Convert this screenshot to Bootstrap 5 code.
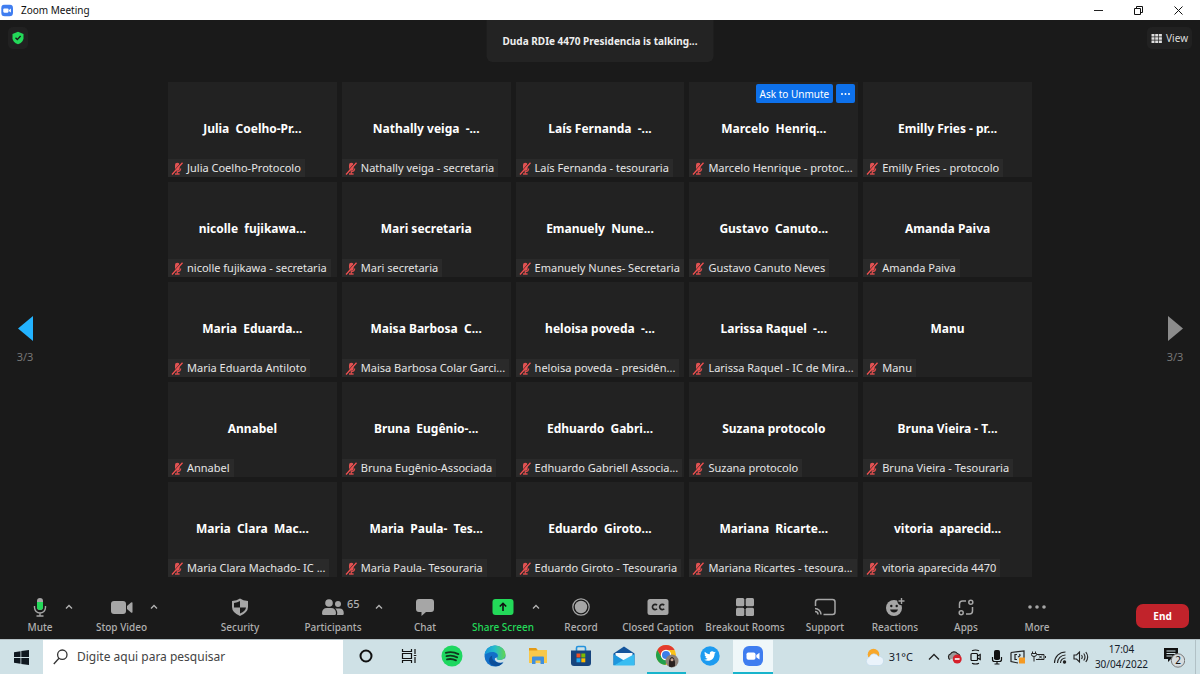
<!DOCTYPE html>
<html lang="pt-BR">
<head>
<meta charset="utf-8">
<meta name="viewport" content="width=device-width, initial-scale=1">
<title>Zoom Meeting</title>
<link href="https://cdn.jsdelivr.net/npm/bootstrap@5.3.0/dist/css/bootstrap.min.css" rel="stylesheet">
<style>
  body { font-family: "Noto Sans", "Open Sans", sans-serif; font-size: 11px; line-height: 16px; background: #1a1a1a; color: #e6e6e6; }
  button { font: inherit; color: inherit; background: none; border: 0; padding: 0; }
  svg { display: block; flex: none; }
  .titlebar { height: 20px; background: #fff; color: #111; font-size: 10px; padding-right: 2px; }
  .win-btn { width: 40px; height: 20px; display: grid; place-content: center; }
  .meeting { min-height: 0; }
  .meeting-top { height: 62px; }
  .talking { background: #232323; border-radius: 0 0 6px 6px; height: 42px; padding: 0 16px; font-size: 10px; font-weight: 700; color: #eee; }
  .corner-btn { background: #212121; border-radius: 5px; height: 22px; font-size: 10px; color: #ddd; margin-top: 7px; }
  .side { width: 14%; }
  .pager { width: 50px; color: #777; font-size: 11px; padding-top: 10px; }
  .gallery { display: grid; grid-template-columns: repeat(5, minmax(0, 1fr)); grid-auto-rows: minmax(0, 1fr); gap: 5px; margin-bottom: 11px; }
  .tile { background: #222; padding-bottom: 2px; }
  .tile-name { font-size: 12px; font-weight: 700; color: #fff; white-space: pre; }
  .tile-label { left: 0; bottom: 0; max-width: 100%; height: 18px; background: #2a2a2a; padding: 0 4px 0 3px; gap: 4px; white-space: nowrap; }
  .tile-tools { top: 2px; right: 3px; gap: 3px; }
  .tile-tools button { background: #0e71eb; color: #fff; height: 19px; padding: 0 4px; border-radius: 2px; font-size: 10px; }
  .controls { display: grid; height: 51px; padding: 0 11px 0 16px; color: #b0b0b0; font-size: 10px; font-weight: 500;
    grid-template-columns: 48fr 30fr 55fr 39fr 104fr 82fr 26fr 50fr 25fr 56fr 10fr 80fr 74fr 100fr 60fr 80fr 62fr 80fr 112fr; }
  .controls > * { min-width: 0; }
  .ctl { display: flex; flex-direction: column; align-items: center; white-space: nowrap; padding-top: 9px; gap: 2px; }
  .ctl svg { height: 20px; }
  .chev { width: 10px; height: 37px; }
  .count { left: 100%; top: -1px; margin-left: 3px; font-size: 11px; }
  .share { color: #23d959; }
  .end-btn { background: #c1232b; color: #fff; width: 53px; height: 24px; border-radius: 7px; font-weight: 700; }
  .taskbar { height: 35px; background: #cfe1e6; color: #16202a; border-top: 1px solid #b4c0c4; }
  .start-btn { width: 43px; }
  .search { width: 25%; background: #fff; padding-left: 10px; gap: 9px; }
  .search input { border: 0; outline: 0; padding: 0; width: 100%; background: none; color: #444; font-size: 12px; }
  .search input::placeholder { color: #444; opacity: 1; }
  .apps { margin-left: 1px; }
  .app { width: 43px; border-bottom: 2px solid transparent; }
  .app.running { border-image: linear-gradient(90deg, transparent 4px, #18b4cc 4px, #18b4cc 39px, transparent 39px) 2; }
  .app.active { background: #eff7f9; border-color: #18b4cc; width: 40px; margin-left: 2px; }
  .weather { gap: 1px; margin-right: 10px; }
  .tray { width: 21px; }
  .clock { width: 61px; font-size: 10px; line-height: 15px; }
  .notif { width: 44px; border-right: 1px solid #b2c1c6; margin-right: 4px; }
</style>
</head>
<body class="vh-100 d-flex flex-column overflow-hidden">

<svg width="0" height="0" class="position-absolute" aria-hidden="true">
  <symbol id="muted" viewBox="0 0 12 13">
    <path d="M4 3a2.300 2.300 0 0 1 4.600 0v3.500a2.300 2.300 0 0 1-4.600 0z" fill="#e05252"/>
    <path d="M6.300 9v3M4 12h4.600M9.600 6.500q0 3-3.300 3" fill="none" stroke="#d84c4c" stroke-width="1.300"/>
    <path d="M10.400.6.600 11.600" stroke="#262626" stroke-width="1"/>
    <path d="M11.500.8 1 12.500" stroke="#f05050" stroke-width="1.300"/>
  </symbol>
  <symbol id="up" viewBox="0 0 10 10"><path d="M2 6.500 5 3.500l3 3" fill="none" stroke="#b4b4b4" stroke-width="1.300"/></symbol>
  <symbol id="cam" viewBox="0 0 20 20">
    <rect width="20" height="20" rx="6" fill="#3f7df0"/>
    <rect x="3.500" y="6.500" width="9" height="7.200" rx="1.800" fill="#fff"/><path d="M13.300 9 16.500 6.700v6.800L13.300 11.200z" fill="#fff"/>
  </symbol>
</svg>

<header class="titlebar d-flex align-items-center flex-shrink-0">
  <svg width="13" height="13" class="ms-0 me-1" viewBox="-2 0 22 20"><use href="#cam" width="20" height="20"/></svg>
  <span class="ps-1">Zoom Meeting</span>
  <div class="d-flex ms-auto">
    <button class="win-btn" aria-label="Minimizar"><svg width="11" height="11"><path d="M1 5.500h9" stroke="#222"/></svg></button>
    <button class="win-btn" aria-label="Restaurar"><svg width="11" height="11"><path d="M1.500 3.500h6v6h-6zM3.500 3V1.500h6v6H8" fill="none" stroke="#111"/></svg></button>
    <button class="win-btn" aria-label="Fechar"><svg width="11" height="11"><path d="m1.500 1.500 8 8m0-8-8 8" stroke="#111"/></svg></button>
  </div>
</header>

<main class="meeting flex-grow-1 d-flex flex-column">
  <div class="meeting-top d-flex justify-content-between align-items-start flex-shrink-0 position-relative">
    <button class="corner-btn d-flex align-items-center px-1 ms-2" aria-label="Criptografia">
      <svg width="12" height="14" viewBox="0 0 12 14"><path d="M6 .8 11.500 3v4.200c0 2.600-2 4.700-5.500 6-3.500-1.300-5.500-3.400-5.500-6V3z" fill="#23d959"/><path d="M3.500 6.800 5.300 8.600 8.600 5" fill="none" stroke="#1a1a1a" stroke-width="1.400"/></svg>
    </button>
    <div class="position-absolute start-50 translate-middle-x top-0 talking d-flex align-items-center text-nowrap">Duda RDIe 4470 Presidencia is talking...</div>
    <button class="corner-btn d-flex align-items-center me-2 px-1 gap-1">
      <svg width="11" height="11" viewBox="0 0 11 11" fill="#ddd"><path d="M.5 1h3v2.500h-3zM4.200 1h3v2.500h-3zM7.900 1h3v2.500h-3zM.5 4.300h3v2.500h-3zM4.200 4.300h3v2.500h-3zM7.900 4.300h3v2.500h-3zM.5 7.600h3v2.500h-3zM4.200 7.600h3v2.500h-3zM7.900 7.600h3v2.500h-3z"/></svg>
      View
    </button>
  </div>
  <div class="d-flex flex-grow-1">
    <div class="side d-flex align-items-center">
      <button class="pager d-flex flex-column align-items-center gap-2" aria-label="Página anterior">
        <svg width="15" height="25"><path d="M15 0v25L0 12.500z" fill="#23b3ff"/></svg>3/3
      </button>
    </div>
    <section class="gallery flex-grow-1" id="gallery" aria-label="Participantes"></section>
    <div class="side d-flex align-items-center justify-content-end">
      <button class="pager d-flex flex-column align-items-center gap-2" aria-label="Próxima página">
        <svg width="15" height="25"><path d="M0 0v25l15-12.500z" fill="#8c8c8c"/></svg>3/3
      </button>
    </div>
  </div>
</main>

<nav class="controls flex-shrink-0" aria-label="Controles da reunião">
  <button class="ctl"><svg width="16" viewBox="0 0 16 20"><rect x="5" y="1" width="6" height="12" rx="3" fill="#a6a6a6"/><path d="M5 5h6v5a3 3 0 0 1-6 0z" fill="#23d959"/><path d="M2.500 9v1.500a5.500 5.500 0 0 0 11 0V9M8 16v3M4.500 19h7" fill="none" stroke="#a6a6a6" stroke-width="1.400"/></svg>Mute</button>
  <button class="chev" aria-label="Opções de áudio"><svg width="10" height="10"><use href="#up"/></svg></button>
  <button class="ctl"><svg width="22" viewBox="0 0 22 20" fill="#a6a6a6"><rect y="4" width="15" height="13" rx="3"/><path d="M16 9l4-3.500q1.500-.8 1.500.5v9q0 1.300-1.500.5L16 12z"/></svg>Stop Video</button>
  <button class="chev" aria-label="Opções de vídeo"><svg width="10" height="10"><use href="#up"/></svg></button>
  <button class="ctl"><svg width="18" viewBox="0 0 18 20"><path d="M9 1.500q3 2.300 8 2.500v6q0 5.500-8 9-8-3.500-8-9V4q5-.2 8-2.500z" fill="#a6a6a6"/><path d="M9 4v6.500H3V6q3.500-.3 6-2zM9 10.500h6q-.3 3.500-6 6z" fill="#1a1a1a"/></svg>Security</button>
  <button class="ctl"><span class="position-relative"><svg width="22" viewBox="0 0 22 20" fill="#a6a6a6"><circle cx="7" cy="6" r="3.800"/><circle cx="16" cy="7" r="3"/><path d="M0 16.500Q0 11 5 11h4q5 0 5 5.500 0 1.500-1.500 1.500h-11Q0 18 0 16.500zM15 18q1-4-1.800-6.500h4.300q4.300 0 4.300 5 0 1.500-1.300 1.500z"/></svg><span class="count position-absolute">65</span></span>Participants</button>
  <button class="chev" aria-label="Opções de participantes"><svg width="10" height="10"><use href="#up"/></svg></button>
  <button class="ctl"><svg width="20" viewBox="0 0 20 20"><path d="M4 2h12q3 0 3 3v7q0 3-3 3h-5l-4.500 4V15H4q-3 0-3-3V5q0-3 3-3z" fill="#a6a6a6"/></svg>Chat</button>
  <span aria-hidden="true"></span>
  <button class="ctl share"><svg width="22" viewBox="0 0 22 20"><rect x=".5" y="2" width="21" height="16" rx="3" fill="#23d959"/><path d="M11 14V6.500M7.800 9.500 11 6.300l3.200 3.200" fill="none" stroke="#111" stroke-width="1.600"/></svg>Share Screen</button>
  <button class="chev" aria-label="Opções de compartilhamento"><svg width="10" height="10"><use href="#up"/></svg></button>
  <button class="ctl"><svg width="18" viewBox="0 0 18 20"><circle cx="9" cy="10" r="8.200" fill="none" stroke="#a6a6a6" stroke-width="1.200"/><circle cx="9" cy="10" r="6.200" fill="#a6a6a6"/></svg>Record</button>
  <button class="ctl"><svg width="22" viewBox="0 0 22 20"><rect x=".5" y="2" width="21" height="16" rx="2.500" fill="#a6a6a6"/><path d="M10 8.300a2.600 2.600 0 1 0 0 3.500M17.200 8.300a2.600 2.600 0 1 0 0 3.500" fill="none" stroke="#222" stroke-width="1.700"/></svg>Closed Caption</button>
  <button class="ctl"><svg width="18" viewBox="0 0 18 20" fill="#a6a6a6"><rect y="1" width="8.300" height="8.300" rx="1.500"/><rect x="9.700" y="1" width="8.300" height="8.300" rx="1.500"/><rect y="10.700" width="8.300" height="8.300" rx="1.500"/><rect x="9.700" y="10.700" width="8.300" height="8.300" rx="1.500"/></svg>Breakout Rooms</button>
  <button class="ctl"><svg width="22" viewBox="0 0 22 20" fill="none" stroke="#a6a6a6" stroke-width="1.500"><path d="M1.500 9V5q0-2.500 2.500-2.500h14.500q2.500 0 2.500 2.500v10q0 2.500-2.500 2.500H9.500M1 11.500a6 6 0 0 1 6 6M1 14.500a3 3 0 0 1 3 3"/></svg>Support</button>
  <button class="ctl"><svg width="20" viewBox="0 0 20 20"><circle cx="9" cy="11" r="8" fill="#a6a6a6"/><circle cx="16.500" cy="4" r="4.200" fill="#1a1a1a"/><path d="M16.500 1v6M13.500 4h6" stroke="#a6a6a6" stroke-width="1.400"/><circle cx="6.300" cy="9" r="1.200" fill="#1a1a1a"/><circle cx="11.700" cy="9" r="1.200" fill="#1a1a1a"/><path d="M5 12.500a4.200 4.200 0 0 0 8 0z" fill="#1a1a1a"/></svg>Reactions</button>
  <button class="ctl"><svg width="16" viewBox="0 0 16 20" fill="none" stroke="#a6a6a6" stroke-width="1.500"><path d="M1.500 11V7q0-3 3-3H8M14.500 10v4q0 3-3 3H8"/><circle cx="12.800" cy="5.200" r="2"/><circle cx="3.200" cy="15.800" r="2"/></svg>Apps</button>
  <button class="ctl"><svg width="20" viewBox="0 0 20 20" fill="#a6a6a6"><circle cx="3" cy="10" r="1.800"/><circle cx="10" cy="10" r="1.800"/><circle cx="17" cy="10" r="1.800"/></svg>More</button>
  <div class="d-flex align-items-center justify-content-end pt-1"><button class="end-btn">End</button></div>
</nav>

<footer class="taskbar d-flex flex-shrink-0">
  <button class="start-btn d-flex align-items-center justify-content-center" aria-label="Iniciar"><svg width="15" height="15" viewBox="0 0 15 15"><path d="M0 2.200 6.500 1.200V7H0zM7.300 1.100 15 0v7H7.300zM0 8h6.500v5.800L0 12.800zM7.300 8H15v7l-7.700-1.100z" fill="#101820"/></svg></button>
  <label class="search d-flex align-items-center">
    <svg width="15" height="16" viewBox="0 0 15 16" fill="none" stroke="#333" stroke-width="1.300"><circle cx="9.300" cy="5.700" r="4.700"/><path d="M6 9.200.8 15"/></svg>
    <input type="text" placeholder="Digite aqui para pesquisar" aria-label="Pesquisar">
  </label>
  <div class="apps d-flex">
    <button class="app d-flex align-items-center justify-content-center" aria-label="Cortana"><svg width="14" height="14"><circle cx="7" cy="7" r="5.500" fill="none" stroke="#111" stroke-width="2"/></svg></button>
    <button class="app d-flex align-items-center justify-content-center" aria-label="Visão de tarefas"><svg width="16" height="16" fill="none" stroke="#111" stroke-width="1.200"><path d="M1.500 1v2.500h9V1M1.500 15v-2.500h9V15M1.500 5.500h9v5h-9zM14 1v5M14 9v6M12.800 7.500h2.500"/></svg></button>
    <button class="app d-flex align-items-center justify-content-center" aria-label="Spotify"><svg width="22" height="22" viewBox="0 0 22 22"><circle cx="11" cy="11" r="10.500" fill="#1ed760"/><path d="M4.800 7.800q6.500-1.900 12.600 1.300M5.500 11.200q5.500-1.500 10.700 1.200M6 14.400q4.600-1.200 9 1" fill="none" stroke="#10351d" stroke-width="1.800" stroke-linecap="round"/></svg></button>
    <button class="app d-flex align-items-center justify-content-center" aria-label="Edge"><svg width="22" height="22" viewBox="0 0 22 22"><defs><linearGradient id="ed" x2="1"><stop stop-color="#1795dc"/><stop offset=".5" stop-color="#25bec9"/><stop offset="1" stop-color="#64d64e"/></linearGradient></defs><circle cx="11" cy="11" r="10.500" fill="#126fc8"/><path d="M.5 10C1.300 4 5.500.5 11 .5c6 0 10.500 4.200 10.500 9 0 4-3 5.500-5.500 5.500-3.500 0-4-1.200-2.800-2.500C15.500 9.500 12 7 8.500 7 4.500 7 1.500 9 .5 10z" fill="url(#ed)"/><path d="M8.300 10.500c-1.500 5 4 8.300 10.800 6.700-2.500 4-8 5.300-12 2.300-3.300-2.700-2.500-7.500 1.200-9z" fill="#0c4f9b"/><path d="M13.200 12.500c-1 1.300-.6 2.500 2.800 2.500 1.600 0 3.300-.7 4.400-1.800l1.600 1.300-2.600 2.800c-4.300 1.300-8.300-.3-8.700-3.300q-.1-1.200 2.500-1.500z" fill="#cfe1e6"/></svg></button>
    <button class="app d-flex align-items-center justify-content-center" aria-label="Explorador de Arquivos"><svg width="20" height="18" viewBox="0 0 20 18"><path d="M1 1h7l2 2h9v13H1z" fill="#f8c84a"/><path d="M1 1h7l1.500 2.500H1z" fill="#e39a17"/><path d="M4 17v-6.500q0-1 1-1h10q1 0 1 1V17h-3.500v-3.500h-5V17z" fill="#3f8fdd"/></svg></button>
    <button class="app d-flex align-items-center justify-content-center" aria-label="Microsoft Store"><svg width="22" height="22" viewBox="0 0 22 22"><path d="M6.500 6V3q0-1.500 1.500-1.500h6q1.500 0 1.500 1.500v3" fill="none" stroke="#2492dc" stroke-width="1.600"/><path d="M1 5.500h20V18q0 3-3 3H4q-3 0-3-3z" fill="#17447d"/><path fill="#f25022" d="M6.500 8.500h4v4h-4z"/><path fill="#7fba00" d="M11.300 8.500h4v4h-4z"/><path fill="#23a8ef" d="M6.500 13.300h4v4h-4z"/><path fill="#ffb900" d="M11.300 13.300h4v4h-4z"/></svg></button>
    <button class="app d-flex align-items-center justify-content-center" aria-label="Email"><svg width="22" height="20" viewBox="0 0 22 20"><path d="M.5 7.500 11 .5l10.500 7V19H.5z" fill="#13549c"/><path d="M2.500 7h17v7h-17z" fill="#f5fafd"/><path d="M.5 8 11 14.500.5 19.500z" fill="#1d96dd"/><path d="M21.500 8 .5 19.500h21z" fill="#39bdf2"/></svg></button>
    <button class="app running d-flex align-items-center justify-content-center" aria-label="Chrome"><svg width="24" height="24" viewBox="0 0 24 24"><circle cx="11" cy="11" r="10" fill="#fbc116"/><path d="M2.300 6A10 10 0 0 1 19.700 6H11a5 5 0 0 0-4.300 7.500z" fill="#e33b2e"/><path d="M2.300 6 6.700 13.500A5 5 0 0 0 12 15.900L10.500 21A10 10 0 0 1 2.300 6z" fill="#22a04b"/><circle cx="11" cy="11" r="5.200" fill="#fff"/><circle cx="11" cy="11" r="4" fill="#3c7ee8"/><circle cx="17" cy="17" r="6.500" fill="#8c8078"/><path d="M14 22.500q-.5-6 1-8 2-3 4 0 1.500 3 1 7.500-3 2-6 .5z" fill="#2a211f"/><circle cx="17" cy="15.800" r="1.500" fill="#c9a793"/></svg></button>
    <button class="app d-flex align-items-center justify-content-center" aria-label="Twitter"><svg width="20" height="20" viewBox="0 0 20 20"><circle cx="10" cy="10" r="9.700" fill="#1d9bf0"/><path d="M15.800 6.300c-.4.200-.9.300-1.400.4.500-.3.900-.8 1-1.300-.4.300-1 .5-1.500.6a2.400 2.400 0 0 0-4.100 2.200c-2-.1-3.700-1-4.900-2.500-.7 1.100-.3 2.500.7 3.200-.4 0-.8-.1-1-.3 0 1.200.8 2.100 1.900 2.400-.4.100-.7.100-1.100 0 .3 1 1.200 1.600 2.200 1.700-1 .8-2.200 1.100-3.500 1 4.600 2.900 10.500.2 10.500-6.200.5-.3.900-.8 1.200-1.200z" fill="#fff"/></svg></button>
    <button class="app active d-flex align-items-center justify-content-center" aria-label="Zoom"><svg width="20" height="20"><use href="#cam"/></svg></button>
  </div>
  <div class="d-flex align-items-stretch ms-auto">
    <button class="weather d-flex align-items-center">
      <svg width="24" height="18" viewBox="0 0 24 18"><circle cx="9.500" cy="6.500" r="5.800" fill="#f8a72a"/><path d="M6 17.500a4.300 4.300 0 0 1-.5-8.400 4.800 4.800 0 0 1 8.800-.8 4.600 4.600 0 0 1 1.200 9.200z" fill="#eaf3fb" stroke="#bed6ea" stroke-width=".6"/></svg>31°C
    </button>
    <button class="tray d-flex align-items-center justify-content-center" aria-label="Ícones ocultos"><svg width="12" height="8"><path d="m1 6.500 5-5 5 5" fill="none" stroke="#222" stroke-width="1.300"/></svg></button>
    <button class="tray d-flex align-items-center justify-content-center" aria-label="OneDrive"><svg width="15" height="14" viewBox="0 0 15 14"><path d="M3 9.500a3 3 0 0 1 .5-5.500 4 4 0 0 1 6.800-.5A3.500 3.500 0 0 1 13 6" fill="#9b9b9b" stroke="#222" stroke-width="1.100"/><circle cx="10.200" cy="9" r="4.500" fill="#d6202b"/><path d="M7.800 9h4.800" stroke="#fff" stroke-width="1.600"/></svg></button>
    <button class="tray d-flex align-items-center justify-content-center" aria-label="Reunir agora"><svg width="14" height="16" fill="none" stroke="#111" stroke-width="1.200"><rect x="2" y="4.500" width="6.500" height="7" rx="1"/><path d="m8.500 7 2.700-1.500v5L8.500 9M3 1.800q3.500-1.600 7 0M3 14.200q3.500 1.600 7 0"/></svg></button>
    <button class="tray d-flex align-items-center justify-content-center" aria-label="Microfone"><svg width="12" height="16"><rect x="3" y="1" width="6" height="10" rx="1.800" fill="#111"/><path d="M1.500 8v2.500q0 2 2 2h5q2 0 2-2V8M6 12.500V15M3.500 15h5" fill="none" stroke="#111" stroke-width="1.200"/></svg></button>
    <button class="tray d-flex align-items-center justify-content-center" aria-label="Atualização"><svg width="16" height="16"><path d="M1 3.500 14 2v7M1 3.500v9l7 1.500M7 5.500H5v5h2M9.500 5q1.500 2-1.500 3" fill="none" stroke="#222" stroke-width="1.200"/><rect x="9" y="8.500" width="6" height="6" fill="#f59a23"/></svg></button>
    <button class="tray d-flex align-items-center justify-content-center" aria-label="Bateria"><svg width="15" height="12" fill="none" stroke="#222"><path d="M6 3.500h7v5H5M14.500 5v2M8 4.500l3 3M11 4.500l-3 3M1.500.5v2M4.500.5v2M.5 2.500h5v1q0 2-2.500 2t-2.500-2zM3 5.500v5"/></svg></button>
    <button class="tray d-flex align-items-center justify-content-center" aria-label="Rede"><svg width="14" height="14" viewBox="0 0 14 14" fill="none" stroke="#222" stroke-width="1.100"><path d="M1.500 13A11 11 0 0 1 12.500 2M4.500 13a8 8 0 0 1 8-8M7.500 13a5 5 0 0 1 5-5"/><circle cx="11.500" cy="12" r="1.200" fill="#222"/></svg></button>
    <button class="tray d-flex align-items-center justify-content-center" aria-label="Volume"><svg width="16" height="14" fill="none" stroke="#222" stroke-width="1.100"><path d="M1 5h2.500L6.500 2v10L3.500 9H1zM8.500 5q1.500 2 0 4M10.700 3.500q2.600 3.500 0 7M12.800 2q3.800 5 0 10"/></svg></button>
    <button class="clock d-flex flex-column align-items-center justify-content-center"><span>17:04</span><span>30/04/2022</span></button>
    <button class="notif d-flex align-items-center justify-content-center" aria-label="2 notificações">
      <svg width="22" height="22" viewBox="0 0 22 22"><path d="M1 2h14v11H8l-3 3v-3H1z" fill="#111"/><path d="M3.500 5h9M3.500 7.500h9M3.500 10h6" stroke="#cfe1e6"/><circle cx="15" cy="14.500" r="6.700" fill="#d5dcdf" stroke="#777"/><text x="15" y="18" text-anchor="middle" font-size="10" fill="#111">2</text></svg>
    </button>
  </div>
</footer>

<script>
  // Each participant: name shown in the middle of the tile, label at its foot.
  const people = [
    ["Julia  Coelho-Pr...", "Julia Coelho-Protocolo"], ["Nathally veiga  -...", "Nathally veiga - secretaria"], ["Laís Fernanda  -...", "Laís Fernanda - tesouraria"], ["Marcelo  Henriq...", "Marcelo Henrique - protoc..."], ["Emilly Fries - pr...", "Emilly Fries - protocolo"],
    ["nicolle  fujikawa...", "nicolle fujikawa - secretaria"], ["Mari secretaria", "Mari secretaria"], ["Emanuely  Nune...", "Emanuely Nunes- Secretaria"], ["Gustavo  Canuto...", "Gustavo Canuto Neves"], ["Amanda Paiva", "Amanda Paiva"],
    ["Maria  Eduarda...", "Maria Eduarda Antiloto"], ["Maisa Barbosa  C...", "Maisa Barbosa Colar Garci..."], ["heloisa poveda  -...", "heloisa poveda - presidên..."], ["Larissa Raquel  -...", "Larissa Raquel - IC de Mira..."], ["Manu", "Manu"],
    ["Annabel", "Annabel"], ["Bruna  Eugênio-...", "Bruna Eugênio-Associada"], ["Edhuardo  Gabri...", "Edhuardo Gabriell Associa..."], ["Suzana protocolo", "Suzana protocolo"], ["Bruna Vieira - T...", "Bruna Vieira - Tesouraria"],
    ["Maria  Clara  Mac...", "Maria Clara Machado- IC ..."], ["Maria  Paula-  Tes...", "Maria Paula- Tesouraria"], ["Eduardo  Giroto...", "Eduardo Giroto - Tesouraria"], ["Mariana  Ricarte...", "Mariana Ricartes - tesoura..."], ["vitoria  aparecid...", "vitoria aparecida 4470"]
  ];
  const hovered = 3;
  document.getElementById("gallery").innerHTML = people.map(([name, label], i) => `
    <article class="tile position-relative d-flex align-items-center justify-content-center">
      <div class="tile-name">${name}</div>
      ${i === hovered ? '<div class="tile-tools position-absolute d-flex"><button>Ask to Unmute</button><button aria-label="Mais"><svg width="11" height="4" fill="#fff"><circle cx="2" cy="2" r="1"/><circle cx="5.500" cy="2" r="1"/><circle cx="9" cy="2" r="1"/></svg></button></div>' : ""}
      <div class="tile-label position-absolute d-flex align-items-center"><svg width="12" height="13"><use href="#muted"/></svg><span>${label}</span></div>
    </article>`).join("");
</script>
<script src="https://cdn.jsdelivr.net/npm/bootstrap@5.3.0/dist/js/bootstrap.bundle.min.js"></script>
</body>
</html>
